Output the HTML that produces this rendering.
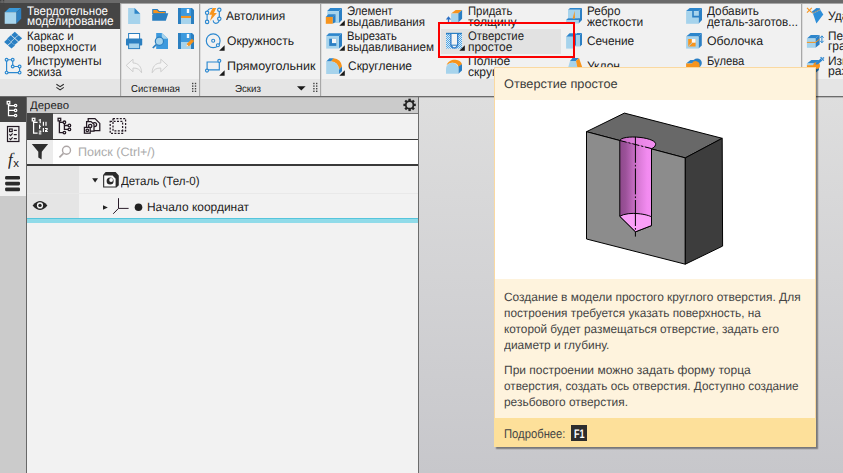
<!DOCTYPE html>
<html><head><meta charset="utf-8">
<style>
*{margin:0;padding:0;box-sizing:border-box}
html,body{width:843px;height:473px;overflow:hidden;background:#cfcfd1}
body{position:relative;font-family:"Liberation Sans",sans-serif;font-size:12px;color:#222;text-rendering:geometricPrecision}
.a{position:absolute}
.t{position:absolute;white-space:nowrap;line-height:16px;height:16px;transform-origin:0 50%}
.sep{position:absolute;top:4px;width:2px;height:92px;background:linear-gradient(90deg,#a8a8a8 50%,#dcdcdc 50%)}
svg{position:absolute;overflow:visible}
</style></head><body>
<!-- workspace -->
<div class="a" style="left:419px;top:96px;width:424px;height:377px;background:linear-gradient(#dedede,#c7c7cb)"></div>
<!-- top strip -->
<div class="a" style="left:0;top:0;width:843px;height:4px;background:#a5a5a5"></div>
<div class="a" style="left:0;top:0;width:843px;height:3px;background:#6a6a6a"></div>
<!-- ribbon -->
<div class="a" style="left:0;top:4px;width:843px;height:75px;background:#f1f1f1"></div>
<div class="a" style="left:0;top:79px;width:843px;height:17px;background:#e5e5e5"></div>
<div class="a" style="left:0;top:96px;width:843px;height:1px;background:#6c6c6c"></div>
<!-- selected tab -->
<div class="a" style="left:0;top:3px;width:120px;height:26px;background:#454545"></div>
<div class="sep" style="left:120px"></div>
<div class="sep" style="left:199px"></div>
<div class="sep" style="left:320px"></div>
<div class="sep" style="left:801px"></div>
<!-- hover bg -->
<div class="a" style="left:441px;top:29px;width:120px;height:25px;background:#e2e2e2"></div>

<!-- left sidebar -->
<div class="a" style="left:0;top:97px;width:26px;height:376px;background:#cbcbcb"></div>
<div class="a" style="left:0;top:122px;width:26px;height:74px;background:#f0f0f0"></div>
<div class="a" style="left:0;top:97px;width:26px;height:25px;background:#454545"></div>
<!-- tree panel -->
<div class="a" style="left:26px;top:97px;width:393px;height:376px;background:#f2f2f2;border-left:1px solid #686868;border-right:1px solid #6c6c6c"></div>
<div class="a" style="left:27px;top:97px;width:391px;height:16px;background:#cbcbcb"></div>
<div class="a" style="left:27px;top:97px;width:391px;height:1px;background:#b2b2b2"></div>
<div class="a" style="left:419px;top:97px;width:424px;height:1px;background:#b8b8b8"></div>
<div class="a" style="left:27px;top:113px;width:391px;height:1px;background:#747474"></div>
<div class="a" style="left:27px;top:113px;width:26px;height:26px;background:#454545"></div>
<div class="a" style="left:27px;top:139px;width:391px;height:1px;background:#3a3a3a"></div>
<div class="a" style="left:27px;top:140px;width:26px;height:24px;background:#ececec"></div>
<div class="a" style="left:53px;top:140px;width:365px;height:24px;background:#fff"></div>
<div class="a" style="left:27px;top:164px;width:391px;height:2px;background:#3a3a3a"></div>
<div class="a" style="left:27px;top:166px;width:52px;height:52px;background:#e5e5e5"></div>
<div class="a" style="left:27px;top:193px;width:391px;height:1px;background:#e9e9e9"></div>
<div class="a" style="left:27px;top:218px;width:391px;height:5px;background:#90dbe9"></div>
<div class="a" style="left:27px;top:218px;width:391px;height:1px;background:#55c5dc"></div>

<svg class="a" style="left:0;top:0" width="843" height="473" viewBox="0 0 843 473">
<defs>
<pattern id="chk" width="2" height="2" patternUnits="userSpaceOnUse"><rect width="2" height="2" fill="#dcecf8"/><rect width="1" height="1" fill="#4da3e3"/><rect x="1" y="1" width="1" height="1" fill="#4da3e3"/></pattern>
<g id="tri"><polygon points="0,-5.5 0,0 -5.5,0" fill="#1a1a1a"/></g>
<g id="save">
<rect x="0" y="0" width="16" height="16" fill="#2b7fc0"/>
<polygon points="14,0 16,0 16,2" fill="#f1f1f1"/>
<rect x="3" y="0" width="10" height="8" fill="#3d9ade"/>
<rect x="8.8" y="1" width="2.4" height="4" fill="#f4f8fc"/>
<rect x="3" y="7.9" width="10" height="2.1" fill="#f7941d"/>
<rect x="3" y="10" width="10" height="6" fill="#a6d3ec"/>
</g>
</defs>
<!-- cube tab icon -->
<polygon points="4.7,12.2 9.3,8 21.2,8 16.2,12.2" fill="#3b98d8"/>
<polygon points="16.2,12.2 21.2,8 21.2,18.8 16.2,23.8" fill="#2e80c0"/>
<rect x="4.7" y="12.2" width="11.5" height="11.6" fill="#a8d5ed"/>
<!-- surface icon -->
<g fill="#2a80c4"><polygon points="11.3,34.9 14.8,31.8 18.3,34.9 14.8,38.0"/><polygon points="7.3,38.4 10.8,35.3 14.3,38.4 10.8,41.5"/><polygon points="15.1,38.3 18.6,35.2 22.1,38.3 18.6,41.4"/><polygon points="4.1,41.9 7.6,38.8 11.1,41.9 7.6,45.0"/><polygon points="11.1,41.9 14.6,38.8 18.1,41.9 14.6,45.0"/><polygon points="8.0,45.5 11.5,42.4 15.0,45.5 11.5,48.6"/></g>
<!-- sketch tools icon -->
<g stroke="#2b88d0" stroke-width="1.15" fill="#f1f1f1">
<path d="M6.6,59.7 H12.7 V66.5 H19.6 V72.6 H6.6 Z" fill="none"/>
<circle cx="6.6" cy="59.7" r="1.4"/><circle cx="12.7" cy="59.7" r="1.4"/><circle cx="12.7" cy="66.5" r="1.4"/><circle cx="19.6" cy="66.5" r="1.4"/><circle cx="19.6" cy="72.6" r="1.4"/><circle cx="6.6" cy="72.6" r="1.4"/>
</g>
<!-- double chevron -->
<path d="M56.4,84.2 L60.1,86.7 L63.8,84.2 M56.4,87.4 L60.1,89.9 L63.8,87.4" stroke="#2a2a2a" stroke-width="1.1" fill="none"/>
<!-- new doc -->
<polygon points="128.1,8 134.5,8 140.2,13.7 140.2,23.9 128.1,23.9" fill="#a6d3ec"/>
<polygon points="134.5,8 140.2,13.7 134.5,13.7" fill="#2e86c8"/>
<!-- folder -->
<path d="M152.2,9 H157.5 L159.3,11.1 H165.8 V14 H152.2 Z" fill="#2b7fc0"/>
<path d="M153.3,10.1 H157 L158.8,12.1 H164.9 V13.4 H153.3 Z" fill="#f7941d"/>
<path d="M152.2,13 V20.7 H165.8 L168.3,13.3 H153.6 L152.6,15 Z" fill="#2b7fc0"/>
<!-- save -->
<use href="#save" x="178" y="8"/>
<!-- printer -->
<rect x="128.6" y="33.5" width="11" height="6" fill="#fdfdfd" stroke="#2b7fc0" stroke-width="1"/>
<rect x="126" y="38.4" width="16.2" height="7.2" rx="0.8" fill="#2b7fc0"/>
<rect x="128.6" y="43" width="11" height="5.6" fill="#a6d3ec" stroke="#2b7fc0" stroke-width="1"/>
<!-- preview -->
<polygon points="156.2,33 161.8,33 168,38.8 168,49 156.2,49" fill="#3d9ade"/>
<polygon points="161.8,33 168,38.8 161.8,38.8" fill="#a6d3ec"/>
<path d="M156.2,44.6 L152.8,48" stroke="#2b7fc0" stroke-width="1.7" fill="none"/>
<circle cx="159.4" cy="41.3" r="4.1" fill="#a6d3ec" stroke="#2b7fc0" stroke-width="1.2"/>
<!-- save as -->
<g transform="translate(178,33)">
<rect x="0" y="0" width="16" height="16" fill="#2b7fc0"/>
<polygon points="14,0 16,0 16,2" fill="#f1f1f1"/>
<rect x="3" y="0" width="10" height="9" fill="#3d9ade"/>
<rect x="8.8" y="1" width="2.4" height="4" fill="#f4f8fc"/>
<rect x="3" y="9" width="10" height="7" fill="#a6d3ec"/>
</g>
<path d="M186.4,46.5 L187.2,43.4 L191.9,38.8 L194.2,41 L189.5,45.7 Z" fill="#f7941d"/>
<path d="M186.4,46.5 L186.9,44.6 L188.3,46 Z" fill="#fff"/>
<path d="M191.2,39.5 L193.5,41.7" stroke="#d9801a" stroke-width=".8"/>
<!-- undo/redo -->
<g stroke="#cfcfcf" stroke-width="1" fill="#f4f4f4" stroke-linejoin="round">
<path d="M126.2,65.4 L133,59.2 V63 C138.5,63 141.6,67 141.6,72.8 C139.8,69.4 137.6,68 133,68 V71.8 Z"/>
<path d="M167.6,65.4 L160.8,59.2 V63 C155.3,63 152.2,67 152.2,72.8 C154,69.4 156.2,68 160.8,68 V71.8 Z"/>
</g>
<!-- grips -->
<g fill="#444">
<g id="grip"><rect x="0" y="0" width="1.4" height="1.4"/><rect x="2.8" y="0" width="1.4" height="1.4"/><rect x="0" y="2.6" width="1.4" height="1.4"/><rect x="2.8" y="2.6" width="1.4" height="1.4"/><rect x="0" y="5.2" width="1.4" height="1.4"/><rect x="2.8" y="5.2" width="1.4" height="1.4"/><rect x="0" y="7.8" width="1.4" height="1.4"/><rect x="2.8" y="7.8" width="1.4" height="1.4"/></g>
</g>
<use href="#grip" x="192" y="82.8" fill="#444"/>
<use href="#grip" x="313.2" y="82.8" fill="#444"/>
<polygon points="297,86.2 305.6,86.2 301.3,90.6" fill="#1a1a1a"/>
<!-- autoline -->
<g stroke="#2b88d0" stroke-width="1.15" fill="none">
<path d="M207.1,12.8 V21.9 M219.3,9.8 V18.8 M207.1,12.8 C207.4,10 209.5,8.4 212.5,8.3 M219.3,18.8 C219.3,22 217.5,23.3 215.8,23.3 C214,23.3 213.2,22 213.3,20.4"/>
</g>
<polygon points="212.7,8.1 216.2,8.1 213.9,13.1 216.9,13.1 210,20.9 211.9,14.7 209.1,14.7" fill="#f7941d"/>
<g stroke="#2b88d0" stroke-width="1.15" fill="#f1f1f1"><circle cx="207.1" cy="12.8" r="1.7"/><circle cx="207.1" cy="21.9" r="1.7"/><circle cx="219.3" cy="9.8" r="1.7"/><circle cx="219.3" cy="18.8" r="1.7"/></g>
<!-- circle -->
<g stroke="#2b88d0" stroke-width="1.15" fill="none"><circle cx="213.2" cy="40.7" r="6.9"/><circle cx="213.2" cy="40.7" r="1.5"/><circle cx="217.9" cy="45.2" r="1.5" fill="#f1f1f1"/></g>
<use href="#tri" x="224.6" y="50.8"/>
<!-- rectangle -->
<g stroke="#2b88d0" stroke-width="1.15" fill="none"><path d="M207.1,62 H219.3 V69.8 H207.1 Z"/><circle cx="219.3" cy="60.8" r="1.5" fill="#f1f1f1"/><circle cx="207" cy="70.6" r="1.5" fill="#f1f1f1"/></g>
<use href="#tri" x="224.6" y="75.8"/>
<!-- extrude -->
<polygon points="327.2,11.1 330.2,8 342,8 339,11.1" fill="#2d86cc"/>
<polygon points="339,11.1 342,8 342,20 339,23" fill="#2b7fc4"/>
<rect x="327.2" y="11.1" width="11.8" height="11.9" fill="#a6d3ec"/>
<polygon points="325.8,16.9 328.3,14.2 335.5,14.2 332.7,16.9" fill="#2d86cc"/>
<polygon points="332.7,16.9 335.5,14.2 335.5,22.1 332.7,23.8" fill="#2b7fc4"/>
<rect x="325.8" y="16.9" width="6.9" height="6.9" fill="#f7941d"/>
<use href="#tri" x="344.8" y="25.7"/>
<!-- cut extrude -->
<polygon points="326.2,35.9 328.9,33.2 342,33.2 338.9,35.9" fill="#2d86cc"/>
<polygon points="338.9,35.9 342,33.2 342,45.9 338.9,48.6" fill="#2b7fc4"/>
<rect x="326.2" y="35.9" width="12.7" height="12.7" fill="#a6d3ec"/>
<rect x="329.2" y="38.7" width="7.1" height="7.2" fill="#2b7fc4"/>
<rect x="332" y="38.7" width="4.3" height="4.4" fill="#f8f8f8"/>
<use href="#tri" x="344.8" y="50.7"/>
<!-- fillet -->
<polygon points="326.2,61.4 329.4,58.3 334,58.3 331,61.4" fill="#2d86cc"/>
<path d="M331,61.4 L333.6,58.3 A8.6,8.6 0 0 1 342,66.6 L339,69.4 A8,8 0 0 0 331,61.4 Z" fill="#f7941d"/>
<polygon points="339,69.4 342,66.6 342,71.2 339,74" fill="#2b7fc4"/>
<path d="M326.2,61.4 H331 A8,8 0 0 1 339,69.4 V74 H326.2 Z" fill="#a6d3ec"/>
<use href="#tri" x="344.8" y="75.7"/>
<!-- thicken -->
<polygon points="451.1,13.6 455.7,10 462.1,10 458.2,13.6" fill="#f7941d"/>
<polygon points="458.2,13.6 462.1,10 462.1,18.8 458.2,22.4" fill="#2b7fc4"/>
<rect x="451.1" y="13.6" width="7.1" height="8.8" fill="#a6d3ec"/>
<path d="M448.5,16.2 L451.2,19.6 H449.1 V22.5 H447.9 V19.6 H445.8 Z" fill="#2b6fc4"/>
<!-- simple hole -->
<rect x="446" y="33" width="16" height="15.6" fill="url(#chk)"/>
<rect x="446" y="32.8" width="16" height="1.5" fill="#2b7fc4"/>
<path d="M450.9,34 V45.2 L453,47.8 H455.6 L457.7,45.2 V34" fill="#f4f4f4" stroke="#2b74c4" stroke-width="1.2"/>
<path d="M450.9,45.2 H457.7" stroke="#2b7fc4" stroke-width="1"/>
<use href="#tri" x="464.8" y="50.7"/>
<!-- full round -->
<path d="M446.6,65.4 C447.6,61.4 451.6,59.6 455.4,59.8 C459,60 461.6,62 462,64.4 L458.4,66.8 C458,64 455,62.6 452.2,62.8 C449.6,63 447.4,64.2 446.6,65.4Z" fill="#f7941d"/>
<polygon points="458.4,66.4 462,64.2 462,70.6 458.4,73.8" fill="#2b7fc4"/>
<path d="M446,73.8 V68.6 A6.2,5.8 0 0 1 458.4,68.6 V73.8 Z" fill="#a6d3ec"/>
<!-- rib -->
<polygon points="568,9.8 570,8 582,8 579.9,9.8" fill="#2d86cc"/>
<polygon points="579.9,9.8 582,8 582,20 578.5,23.5 578.5,18.3 579.9,18.3" fill="#2b7fc4"/>
<rect x="568" y="9.8" width="11.9" height="8.5" fill="#a6d3ec"/>
<polygon points="566.1,20 568,18.3 579.9,18.3 578.5,20" fill="#2d86cc"/>
<rect x="566.1" y="20" width="12.4" height="3.5" fill="#a6d3ec"/>
<polygon points="574.6,10.8 575,18.6 572.6,18.8" fill="#f7941d"/>
<!-- section -->
<polygon points="575,35 577,33 582,33 580,35" fill="#2d86cc"/>
<polygon points="580,35 582,33 582,44.5 580,46.5" fill="#2b7fc4"/>
<rect x="575" y="35" width="5" height="11.5" fill="#a6d3ec"/>
<polygon points="566.1,36.8 569.5,33.2 576,33.2 572.6,36.8" fill="#2d86cc"/>
<polygon points="572.6,36.8 576,33.2 576,45 572.6,48.6" fill="#2b7fc4"/>
<rect x="566.1" y="36.8" width="6.5" height="11.8" fill="#a6d3ec"/>
<!-- draft -->
<polygon points="570,61 572.5,58 579,58 576,61" fill="#2d86cc"/>
<polygon points="570,61 576,61 577.5,68 568,68" fill="#a6d3ec"/>
<polygon points="576,61 579,58 582.5,68 577.5,68" fill="#f7941d"/>
<!-- add part -->
<polygon points="686.1,11.1 689.7,8 702,8 698.5,11.1" fill="#2d86cc"/>
<polygon points="698.5,11.1 702,8 702,20 698.5,23.8" fill="#2b7fc4"/>
<rect x="686.1" y="11.1" width="12.4" height="12.7" fill="#a6d3ec"/>
<path d="M692.2,10.5 H693.8 V15.8 H700.4 V17.5 H692.2 Z" fill="#2b7fc4"/>
<!-- shell -->
<polygon points="686.1,36.6 690.3,33.1 701.8,33.1 698.5,36.6" fill="#2d86cc"/>
<polygon points="698.5,36.6 701.8,33.1 701.8,45.5 698.5,48.6" fill="#2b7fc4"/>
<rect x="686.1" y="36.6" width="12.4" height="12" fill="#a6d3ec"/>
<rect x="688.2" y="39" width="7.4" height="7.5" fill="#f7941d"/>
<rect x="691.8" y="39" width="3.8" height="3.7" fill="#fafafa"/>
<path d="M688.4,46.3 L692,42.8" stroke="#a6d3ec" stroke-width="1"/>
<!-- boolean -->
<circle cx="697.2" cy="63" r="4.6" fill="#2b7fc4"/>
<polygon points="686.1,63.4 690.4,60 696,60 692,63.4" fill="#2d86cc"/>
<path d="M686.1,63.4 H692 A4,4 0 0 1 699.6,65 V68 H686.1 Z" fill="#f7941d"/>
<!-- delete face -->
<path d="M807,7.9 L811.8,12.7 M811.8,7.9 L807,12.7" stroke="#f7941d" stroke-width="1.1"/>
<polygon points="813,13.8 820.4,9.9 823.3,14.4 816.4,23.6" fill="#2d8ed8"/>
<polygon points="811.8,11.8 816.4,8 819.9,8.2 820.4,9.9 813,13.8" fill="#2b86d0"/>
<path d="M812.6,13.2 L820.4,9.5" stroke="#f7a540" stroke-width="1" stroke-dasharray="1.2,1"/>
<!-- move faces -->
<polygon points="806.9,38.4 810.8,35.1 819.6,35.1 815.4,38.4" fill="#2d86cc"/>
<polygon points="815.4,38.4 819.6,35.1 819.6,44.5 815.4,47.8" fill="#2b7fc4"/>
<rect x="806.9" y="38.4" width="8.5" height="9.4" fill="#a6d3ec"/>
<path d="M806.9,42.4 H815.4 L819.6,39.2" stroke="#f7941d" stroke-width="1" fill="none"/>
<path d="M821.9,36 V42.6 M820.2,37.8 L821.9,35.8 L823.6,37.8 M820.2,40.8 L821.9,42.8 L823.6,40.8" stroke="#2b88d0" stroke-width="1" fill="none"/>
<!-- edit size -->
<polygon points="806.9,63.4 811.4,60 819,60 815,63.4" fill="#2d86cc"/>
<rect x="806.9" y="63.4" width="8.4" height="2" fill="#a6d3ec"/>
<rect x="806.9" y="65.2" width="8.4" height="3" fill="#f7941d"/>
<polygon points="815.3,63.4 819,60 819,70 815.3,73" fill="#2b7fc4"/>
<circle cx="816.6" cy="65.6" r="3.4" fill="#f7941d"/>
<path d="M815.4,64.6 L816.2,62.4 L820.6,58.6 L822.4,60.6 L818,64.2 Z" fill="#2b86d0"/>
<path d="M820.6,57.2 L823.8,60.6" stroke="#2b86d0" stroke-width="1.3"/>
<path d="M822.6,58.6 L824,57.4" stroke="#2b86d0" stroke-width="1.3"/>
<!-- sidebar: tree icon (white) -->
<g stroke="#fff" stroke-width="1.25" fill="none">
<path d="M8.5,104 V115.5 H14.4 M8.5,105.5 H14.4 M8.5,110.4 H14.4"/>
<rect x="7.2" y="101.4" width="2.6" height="2.6" fill="#454545"/>
<circle cx="15.6" cy="105.5" r="1.2" fill="#454545"/><circle cx="15.6" cy="110.4" r="1.2" fill="#454545"/><circle cx="15.6" cy="115.5" r="1.2" fill="#454545"/>
</g>
<!-- checklist -->
<g stroke="#241a24" stroke-width="1.2" fill="none">
<rect x="7.5" y="126.5" width="11.4" height="15"/>
<rect x="9.6" y="129" width="2.6" height="2.6"/>
<path d="M13.8,130.4 H16.8 M13.8,134.6 H16.8 M13.8,138.6 H16.8" stroke-width="1.1"/>
<path d="M9.4,134.4 L10.6,135.6 L12.6,133.4 M9.4,138.4 L10.6,139.6 L12.6,137.4" stroke-width="1.1"/>
</g>
<!-- hamburger -->
<g fill="#2a2a2a"><rect x="5.1" y="175.9" width="14.9" height="3.7" rx="1.3"/><rect x="5.1" y="181.7" width="14.9" height="3.7" rx="1.3"/><rect x="5.1" y="187.5" width="14.9" height="3.7" rx="1.3"/></g>
<!-- gear -->
<g transform="translate(409.6,104.9)">
<g fill="#222"><rect x="-1.2" y="-6.2" width="2.4" height="12.4"/><rect x="-1.2" y="-6.2" width="2.4" height="12.4" transform="rotate(45)"/><rect x="-1.2" y="-6.2" width="2.4" height="12.4" transform="rotate(90)"/><rect x="-1.2" y="-6.2" width="2.4" height="12.4" transform="rotate(135)"/></g>
<circle r="3.8" fill="#cbcbcb" stroke="#222" stroke-width="1.7"/>
</g>
<!-- toolbar icon 1 (white) -->
<g stroke="#fff" stroke-width="1.25" fill="none">
<path d="M33.6,121 V133.2 H37.6 M33.6,122.3 H37.6"/>
<rect x="32.3" y="118.3" width="2.6" height="2.6"/>
</g>
<g fill="#fff">
<rect x="39.6" y="119" width="1.2" height="4.2"/><rect x="38.6" y="119.6" width="1.2" height="1"/>
<rect x="42.8" y="121.8" width="1.2" height="4"/><rect x="45.4" y="121.8" width="1.2" height="4"/>
<rect x="39" y="124.6" width="1.2" height="4.2"/><rect x="39.8" y="126" width="1" height="1"/>
<rect x="42.8" y="128" width="1.2" height="4"/><rect x="45" y="128" width="2.6" height="1"/><rect x="46.4" y="128.6" width="1.2" height="1.6"/><rect x="45" y="130" width="2" height="1"/><rect x="45" y="131" width="2.8" height="1"/>
<rect x="38.8" y="130.6" width="2.4" height="1"/><rect x="40.2" y="131.2" width="1.1" height="1.4"/><rect x="38.8" y="132.4" width="1.6" height="1"/><rect x="38.8" y="133.4" width="2.6" height="1"/>
</g>
<!-- toolbar icon 2 -->
<g stroke="#241a24" stroke-width="1.3" fill="none">
<path d="M59.4,121 V132.6 H63 M59.4,122.3 H63 M64.4,123.8 V129.4 H68 M64.4,125.5 H68"/>
<rect x="58.1" y="118.3" width="2.6" height="2.6"/>
<circle cx="64.4" cy="122.3" r="1.3"/><circle cx="69.4" cy="125.5" r="1.3"/><circle cx="69.4" cy="129.4" r="1.3"/><circle cx="64.4" cy="132.6" r="1.3"/>
</g>
<!-- toolbar icon 3 -->
<g stroke="#241a24" stroke-width="1.25" fill="#f2f2f2">
<path d="M88.2,118.6 H95 L99.8,123.4 V130.6 H88.2 Z"/>
<circle cx="94.6" cy="124.6" r="2"/>
<path d="M86.6,121.6 H91 L94,124.2 V131.2 H86.6 Z"/>
<circle cx="90.2" cy="126" r="1.7"/>
<rect x="84.4" y="127.4" width="5.8" height="5.8"/>
<circle cx="87.3" cy="130.3" r="1.3"/>
</g>
<!-- toolbar icon 4 -->
<g stroke="#241a24" stroke-width="1.25" fill="none" stroke-dasharray="2,1.4">
<rect x="113" y="118.6" width="12.6" height="12.2"/>
<rect x="110.2" y="121.4" width="12.4" height="12"/>
</g>
<!-- filter -->
<polygon points="31.8,144.1 48.1,144.1 41.8,151.8 41.6,159.6 38.3,157.4 38.3,151.8" fill="#2e2e2e"/>
<!-- search icon -->
<g stroke="#ada6a6" stroke-width="1.4" fill="none"><circle cx="66.5" cy="150.3" r="4"/><path d="M63.4,153.4 L59.4,157.4" stroke-width="1.7"/></g>
<!-- tree row 1 -->
<polygon points="92.2,178.3 98,178.3 95.1,182.6" fill="#222"/>
<polygon points="103.1,175 105.6,172.1 115.6,172.1 118.8,175.4 118.8,185.2 116.4,187.5 103.1,187.5" fill="#2a2a2a"/>
<polygon points="104.2,175.6 112.6,175.6 115.6,178.8 115.6,186.4 104.2,186.4" fill="#fbfbfb"/>
<circle cx="110.1" cy="180.9" r="3.5" fill="#2a2a2a"/>
<circle cx="111.1" cy="180" r="1.9" fill="#fbfbfb"/>
<!-- tree row 2 -->
<polygon points="103,205.2 107.8,207.5 103,209.8" fill="#222"/>
<path d="M118.5,198.2 V208.4 H128.6 M118.5,208.4 L113.2,213.8" stroke="#2a1c2a" stroke-width="1" fill="none"/>
<circle cx="138.5" cy="207.2" r="3.8" fill="#222"/>
<!-- eye -->
<path d="M32.6,205.4 C35.5,202 38,200.9 40,200.9 C42,200.9 44.6,202 47.4,205.4 C44.6,208.8 42,209.9 40,209.9 C38,209.9 35.5,208.8 32.6,205.4 Z" fill="#262626"/>
<circle cx="40" cy="205.4" r="3.1" fill="#f4f4f4"/>
<circle cx="40" cy="205.4" r="1.7" fill="#262626"/>
</svg>
<div class="a" style="left:7.6px;top:148px;font:italic 17.5px/22px 'Liberation Serif',serif;color:#222;transform:scaleX(.95);transform-origin:0 0">f</div>
<div class="a" style="left:13.3px;top:156.6px;font:11.5px/14px 'Liberation Sans',sans-serif;color:#222;transform-origin:0 0">x</div>

<div class="t" id="t0" style="left:27.0px;top:3px;font-size:12.4px;color:#fff;transform:scaleX(0.9295);">Твердотельное</div>
<div class="t" id="t1" style="left:27.0px;top:13px;font-size:12.4px;color:#fff;transform:scaleX(0.9539);">моделирование</div>
<div class="t" id="t2" style="left:27.0px;top:28px;font-size:12.4px;color:#222;transform:scaleX(0.9311);">Каркас и</div>
<div class="t" id="t3" style="left:27.0px;top:39px;font-size:12.4px;color:#222;transform:scaleX(0.9583);">поверхности</div>
<div class="t" id="t4" style="left:27.0px;top:53px;font-size:12.4px;color:#222;transform:scaleX(0.9655);">Инструменты</div>
<div class="t" id="t5" style="left:26.5px;top:64px;font-size:12.4px;color:#222;transform:scaleX(0.9215);">эскиза</div>
<div class="t" id="t6" style="left:131.0px;top:82px;font-size:10.2px;color:#222;transform:scaleX(0.9392);">Системная</div>
<div class="t" id="t7" style="left:235.2px;top:82px;font-size:10.2px;color:#222;transform:scaleX(0.9541);">Эскиз</div>
<div class="t" id="t8" style="left:226.3px;top:8px;font-size:12.4px;color:#222;transform:scaleX(0.9664);">Автолиния</div>
<div class="t" id="t9" style="left:226.5px;top:33px;font-size:12.4px;color:#222;transform:scaleX(0.9781);">Окружность</div>
<div class="t" id="t10" style="left:226.5px;top:58px;font-size:12.4px;color:#222;transform:scaleX(1.0094);">Прямоугольник</div>
<div class="t" id="t11" style="left:347.4px;top:3px;font-size:12.4px;color:#222;transform:scaleX(0.9041);">Элемент</div>
<div class="t" id="t12" style="left:347.4px;top:14px;font-size:12.4px;color:#222;transform:scaleX(0.9300);">выдавливания</div>
<div class="t" id="t13" style="left:347.4px;top:28px;font-size:12.4px;color:#222;transform:scaleX(0.9034);">Вырезать</div>
<div class="t" id="t14" style="left:347.4px;top:39px;font-size:12.4px;color:#222;transform:scaleX(0.9397);">выдавливанием</div>
<div class="t" id="t15" style="left:347.6px;top:58px;font-size:12.4px;color:#222;transform:scaleX(0.9647);">Скругление</div>
<div class="t" id="t16" style="left:467.8px;top:3px;font-size:12.4px;color:#222;transform:scaleX(0.9116);">Придать</div>
<div class="t" id="t17" style="left:467.8px;top:14px;font-size:12.4px;color:#222;transform:scaleX(0.9809);">толщину</div>
<div class="t" id="t18" style="left:467.8px;top:28px;font-size:12.4px;color:#222;transform:scaleX(0.9145);">Отверстие</div>
<div class="t" id="t19" style="left:467.8px;top:39px;font-size:12.4px;color:#222;transform:scaleX(0.9649);">простое</div>
<div class="t" id="t20" style="left:467.8px;top:53px;font-size:12.4px;color:#222;transform:scaleX(0.9749);">Полное</div>
<div class="t" id="t21" style="left:467.8px;top:64px;font-size:12.4px;color:#222;transform:scaleX(0.9749);">скругление</div>
<div class="t" id="t22" style="left:587.1px;top:3px;font-size:12.4px;color:#222;transform:scaleX(0.9446);">Ребро</div>
<div class="t" id="t23" style="left:587.1px;top:14px;font-size:12.4px;color:#222;transform:scaleX(0.9657);">жесткости</div>
<div class="t" id="t24" style="left:587.1px;top:33px;font-size:12.4px;color:#222;transform:scaleX(0.9547);">Сечение</div>
<div class="t" id="t25" style="left:587.1px;top:58px;font-size:12.4px;color:#222;transform:scaleX(0.9710);">Уклон</div>
<div class="t" id="t26" style="left:706.7px;top:3px;font-size:12.4px;color:#222;transform:scaleX(0.9495);">Добавить</div>
<div class="t" id="t27" style="left:706.7px;top:14px;font-size:12.4px;color:#222;transform:scaleX(0.9407);">деталь-заготов...</div>
<div class="t" id="t28" style="left:706.7px;top:33px;font-size:12.4px;color:#222;transform:scaleX(0.9931);">Оболочка</div>
<div class="t" id="t29" style="left:706.7px;top:53px;font-size:12.4px;color:#222;transform:scaleX(0.9042);">Булева</div>
<div class="t" id="t30" style="left:706.7px;top:64px;font-size:12.4px;color:#222;transform:scaleX(0.9452);">операция</div>
<div class="t" id="t31" style="left:828.0px;top:8px;font-size:12.4px;color:#222;transform:scaleX(0.9723);">Удалить</div>
<div class="t" id="t32" style="left:828.0px;top:28px;font-size:12.4px;color:#222;transform:scaleX(0.9483);">Переместить</div>
<div class="t" id="t33" style="left:828.0px;top:38px;font-size:12.4px;color:#222;transform:scaleX(0.9664);">грани</div>
<div class="t" id="t34" style="left:828.0px;top:53px;font-size:12.4px;color:#222;transform:scaleX(0.9659);">Изменить</div>
<div class="t" id="t35" style="left:828.0px;top:63px;font-size:12.4px;color:#222;transform:scaleX(0.9850);">размер</div>
<div class="t" id="t36" style="left:30.0px;top:98px;font-size:11px;color:#222;transform:scaleX(1.0361);">Дерево</div>
<div class="t" id="t37" style="left:77.6px;top:144px;font-size:12.2px;color:#ababab;transform:scaleX(1.0303);">Поиск (Ctrl+/)</div>
<div class="t" id="t38" style="left:121.0px;top:173px;font-size:12px;color:#222;transform:scaleX(0.9629);">Деталь (Тел-0)</div>
<div class="t" id="t39" style="left:146.6px;top:199px;font-size:12px;color:#222;transform:scaleX(0.9950);">Начало координат</div>
<!-- tooltip -->
<div class="a" style="left:494px;top:67px;width:322px;height:380px;background:#fef3dd;border:1px solid #fad9a1;box-shadow:2px 2px 1.2px rgba(0,0,0,.4)"></div>
<div class="a" style="left:495px;top:100px;width:320px;height:179px;background:#fff"></div>
<div class="a" style="left:494px;top:418px;width:322px;height:29px;background:#fde09a"></div>
<div class="a" style="left:571px;top:425px;width:16px;height:16px;background:#2d2d2d"></div>
<svg class="a" style="left:0;top:0" width="843" height="473" viewBox="0 0 843 473">
<defs>
<linearGradient id="pg" x1="620" x2="652" y1="0" y2="0" gradientUnits="userSpaceOnUse">
<stop offset="0" stop-color="#8e4a8b"/><stop offset=".18" stop-color="#9c529a"/><stop offset=".55" stop-color="#d678d3"/><stop offset=".85" stop-color="#f28bf0"/><stop offset="1" stop-color="#f48ef2"/>
</linearGradient>
<linearGradient id="pg2" x1="620" x2="656" y1="0" y2="0" gradientUnits="userSpaceOnUse">
<stop offset="0" stop-color="#c66cc3"/><stop offset=".5" stop-color="#e683e3"/><stop offset="1" stop-color="#f690f4"/>
</linearGradient>
</defs>
<g stroke="#000" stroke-width="1" stroke-linejoin="round">
<polygon points="624.4,113.1 722.2,138.3 685.3,157.9 586.5,131.7" fill="#686868"/>
<polygon points="586.5,131.7 685.3,157.9 685.3,264.2 586.5,239" fill="#8c8c8c"/>
<polygon points="685.3,157.9 722.2,138.3 722.6,246.1 685.3,264.2" fill="#3d3d3d"/>
<!-- hole top ellipse -->
<path d="M619.8,140.5 C620.5,137.6 630,136.3 640,137.4 C650,138.5 656.5,141.5 655.6,144.6 C655,146.8 653.6,148 651.5,148.6" fill="url(#pg2)"/>
<!-- hole body -->
<path d="M651.5,148.6 L651.5,225.6 L635.5,231.8 L619.8,216.3 L619.8,140.5" fill="url(#pg)"/>
<!-- cone -->
<path d="M619.8,216.3 C624,213.6 632,213 638,213.6 C645,214.3 650,215.8 651.5,217 L651.5,225.6 L635.5,231.8 Z" fill="#fa9ff8"/>
</g>
<path d="M619.8,140.5 L651.5,148.6" stroke="#000" stroke-width="1" stroke-dasharray="7,2,2,2" fill="none"/>
<path d="M635.4,136.8 L635.4,236.6" stroke="#000" stroke-width="1" stroke-dasharray="26,2,1.7,1.9" fill="none"/>
</svg>

<div class="t" id="t40" style="left:504.3px;top:76px;font-size:12.4px;color:#3a3a3a;transform:scaleX(1.0274);">Отверстие простое</div>
<div class="t" id="t41" style="left:504.0px;top:289px;font-size:12px;color:#444;transform:scaleX(0.9937);">Создание в модели простого круглого отверстия. Для</div>
<div class="t" id="t42" style="left:504.0px;top:305px;font-size:12px;color:#444;transform:scaleX(0.9835);">построения требуется указать поверхность, на</div>
<div class="t" id="t43" style="left:504.0px;top:321px;font-size:12px;color:#444;transform:scaleX(0.9814);">которой будет размещаться отверстие, задать его</div>
<div class="t" id="t44" style="left:504.0px;top:337px;font-size:12px;color:#444;transform:scaleX(0.9931);">диаметр и глубину.</div>
<div class="t" id="t45" style="left:504.0px;top:362px;font-size:12px;color:#444;">При построении можно задать форму торца</div>
<div class="t" id="t46" style="left:504.0px;top:378px;font-size:12px;color:#444;transform:scaleX(0.9765);">отверстия, создать ось отверстия. Доступно создание</div>
<div class="t" id="t47" style="left:504.0px;top:394px;font-size:12px;color:#444;transform:scaleX(0.9924);">резьбового отверстия.</div>
<div class="t" id="t48" style="left:503.6px;top:426px;font-size:12.8px;color:#444;transform:scaleX(0.8796);">Подробнее:</div>
<div class="t" id="t49" style="left:574.2px;top:426px;font-size:12.5px;color:#fff;transform:scaleX(0.7263);font-weight:bold;">F1</div>
<!-- red annotation box -->
<div class="a" style="left:438px;top:22px;width:137px;height:36px;border:2px solid #fb0000"></div>
</body></html>
